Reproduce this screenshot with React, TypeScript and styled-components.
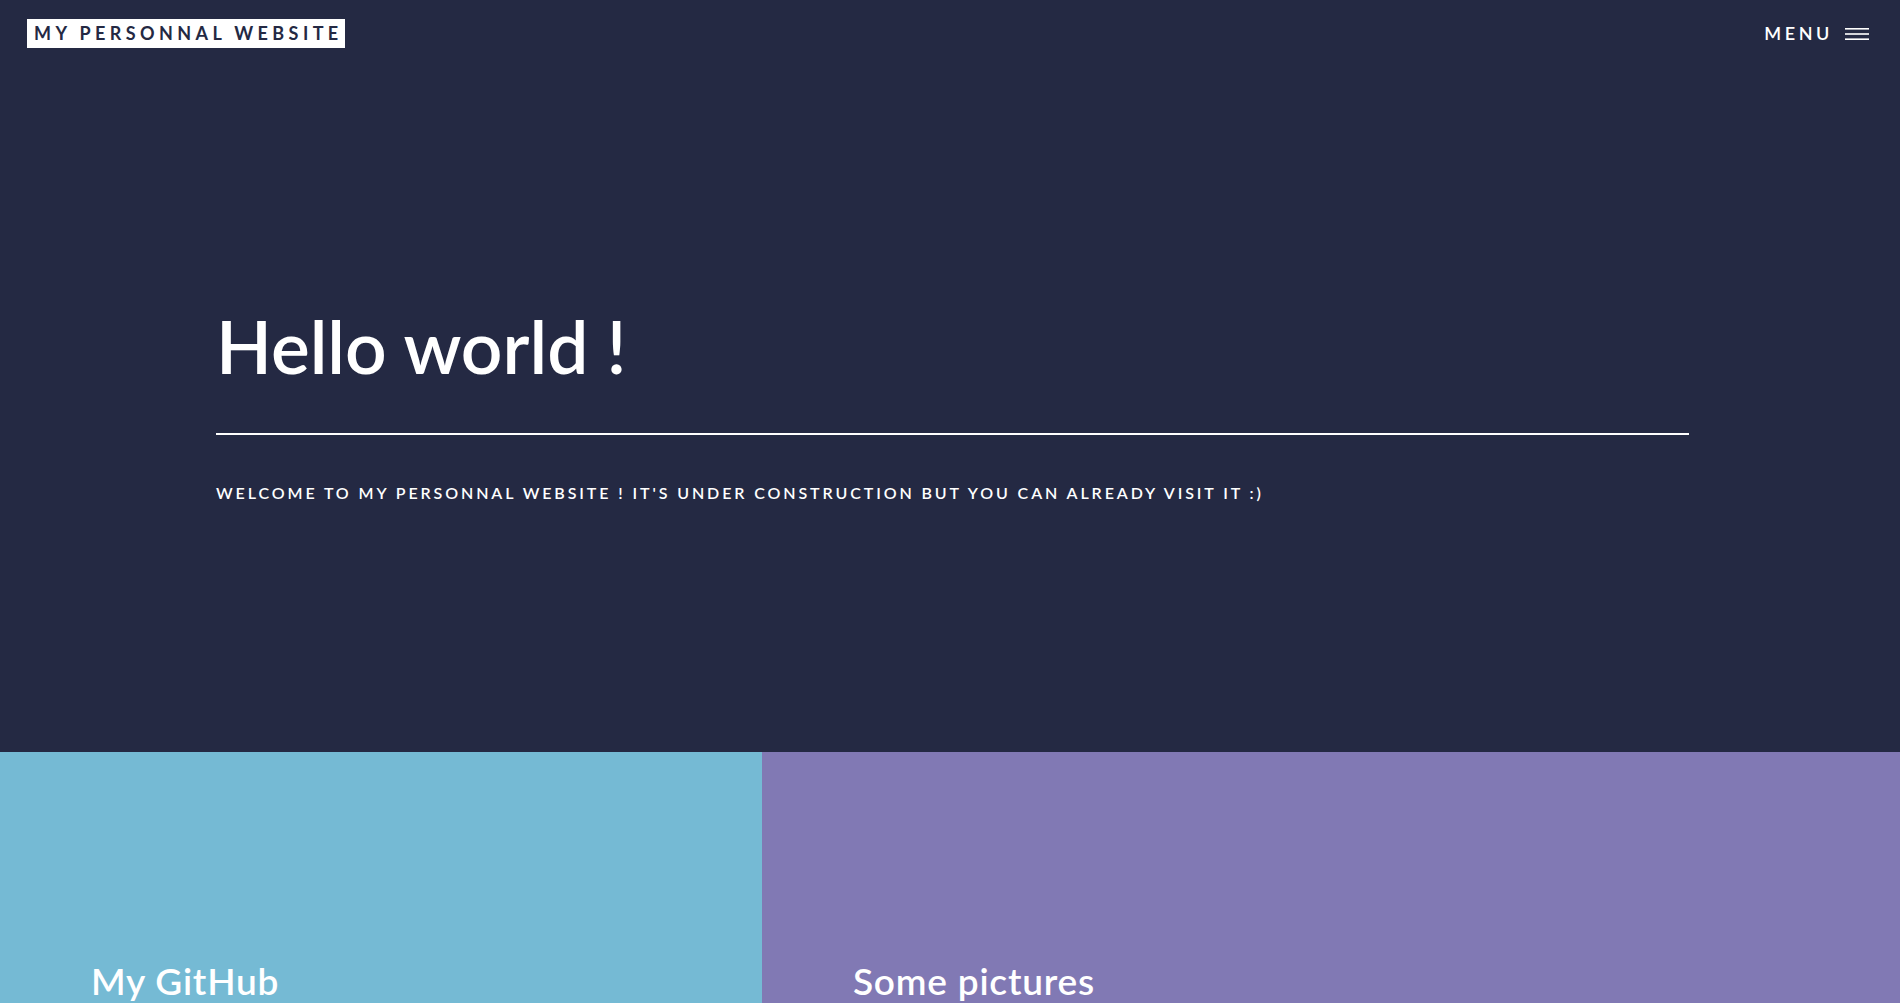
import React from "react";
import styled, { createGlobalStyle } from "styled-components";

const GlobalStyle = createGlobalStyle`
  *, *::before, *::after { box-sizing: border-box; }
  html, body {
    margin: 0;
    padding: 0;
    background: #242943;
  }
  body {
    font-family: Lato, "Liberation Sans", sans-serif;
    color: #ffffff;
    overflow: hidden;
  }
`;

const Page = styled.div`
  display: flex;
  flex-direction: column;
  min-height: 100vh;
  background: #242943;
`;

const Header = styled.header`
  display: flex;
  justify-content: space-between;
  align-items: flex-start;
  height: 74px;
  padding: 19px 31px 0 27px;
  font-weight: 600;
  text-transform: uppercase;
`;

const Logo = styled.a`
  display: inline-block;
  height: 29px;
  line-height: 29px;
  padding: 0 2px 0 7px;
  background: #ffffff;
  color: #242943;
  font-size: 18px;
  font-weight: 700;
  letter-spacing: 4.4px;
  text-decoration: none;
  white-space: nowrap;
`;

const MenuButton = styled.a`
  display: flex;
  align-items: center;
  gap: 12px;
  height: 29px;
  line-height: 29px;
  color: #ffffff;
  font-size: 18px;
  font-weight: 600;
  letter-spacing: 3.6px;
  text-decoration: none;
`;

const Banner = styled.section`
  height: 678px;
  padding: 236px 211px 0 216px;
`;

const BannerInner = styled.div`
  display: flex;
  flex-direction: column;
`;

const Title = styled.h1`
  margin: 0;
  font-size: 73px;
  line-height: 1;
  font-weight: 600;
  letter-spacing: 0;
  color: #ffffff;
`;

const Rule = styled.div`
  height: 2px;
  margin-top: 50px;
  background: #ffffff;
`;

const Lead = styled.p`
  margin: 50px 0 0 0;
  font-size: 16px;
  line-height: 1;
  font-weight: 600;
  letter-spacing: 2.9px;
  text-transform: uppercase;
  color: #ffffff;
`;

const Tiles = styled.section`
  display: flex;
  flex-wrap: wrap;
`;

const Tile = styled.article<{ $color: string; $width: string }>`
  display: flex;
  flex-direction: column;
  width: ${(p) => p.$width};
  height: 521px;
  padding: 210px 91px 0 91px;
  background: ${(p) => p.$color};
`;

const TileTitle = styled.h3`
  margin: 0;
  font-size: 37px;
  line-height: 1;
  font-weight: 600;
  color: #ffffff;
  letter-spacing: 0.8px;
`;

const Hamburger = () => (
  <svg width="24" height="12" viewBox="0 0 24 12" aria-hidden="true">
    <rect x="0" y="0" width="24" height="1.6" fill="#ffffff" />
    <rect x="0" y="5.2" width="24" height="1.6" fill="#ffffff" />
    <rect x="0" y="10.4" width="24" height="1.6" fill="#ffffff" />
  </svg>
);

export default function App() {
  return (
    <>
      <GlobalStyle />
      <Page>
        <Header>
          <Logo href="#">My personnal website</Logo>
          <MenuButton href="#">
            <span>Menu</span>
            <Hamburger />
          </MenuButton>
        </Header>
        <Banner>
          <BannerInner>
            <Title>Hello world !</Title>
            <Rule />
            <Lead>
              Welcome to my personnal website ! It's under construction but you can already visit it :)
            </Lead>
          </BannerInner>
        </Banner>
        <Tiles>
          <Tile $color="#75bad4" $width="40.1%">
            <TileTitle>My GitHub</TileTitle>
          </Tile>
          <Tile $color="#8179b4" $width="59.9%">
            <TileTitle>Some pictures</TileTitle>
          </Tile>
        </Tiles>
      </Page>
    </>
  );
}
